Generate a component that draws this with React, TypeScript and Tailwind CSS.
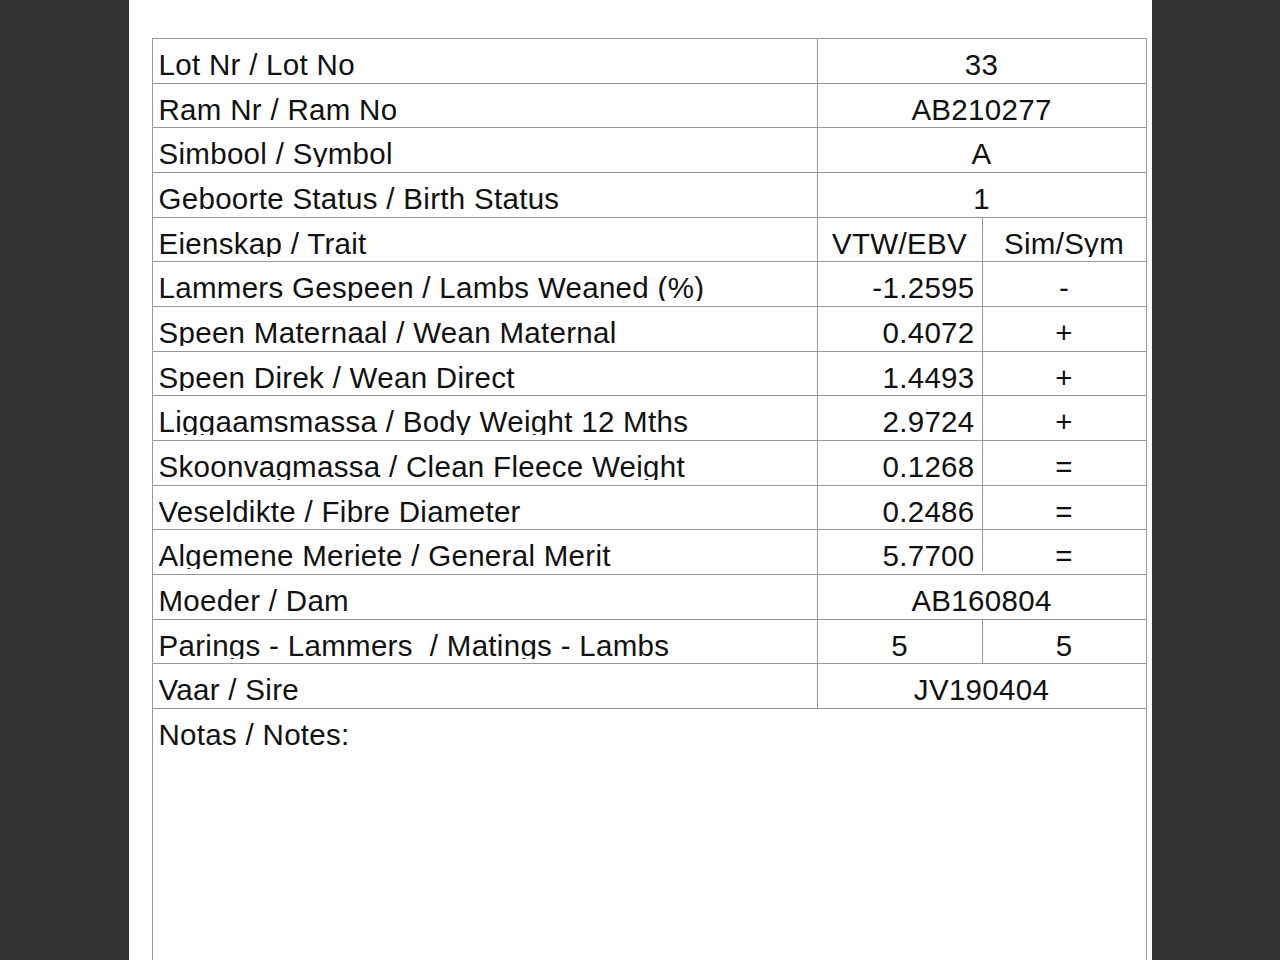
import React from "react";

type Row =
  | { kind: "single"; label: string; value: string }
  | { kind: "split"; label: string; left: string; right: string; leftAlign?: "right" | "center"; cutLine?: boolean };

const rows: Row[] = [
  { kind: "single", label: "Lot Nr / Lot No", value: "33" },
  { kind: "single", label: "Ram Nr / Ram No", value: "AB210277" },
  { kind: "single", label: "Simbool / Symbol", value: "A" },
  { kind: "single", label: "Geboorte Status / Birth Status", value: "1" },
  { kind: "split", label: "Eienskap / Trait", left: "VTW/EBV", right: "Sim/Sym", leftAlign: "center" },
  { kind: "split", label: "Lammers Gespeen / Lambs Weaned (%)", left: "-1.2595", right: "-" },
  { kind: "split", label: "Speen Maternaal / Wean Maternal", left: "0.4072", right: "+" },
  { kind: "split", label: "Speen Direk / Wean Direct", left: "1.4493", right: "+" },
  { kind: "split", label: "Liggaamsmassa / Body Weight 12 Mths", left: "2.9724", right: "+" },
  { kind: "split", label: "Skoonvagmassa / Clean Fleece Weight", left: "0.1268", right: "=" },
  { kind: "split", label: "Veseldikte / Fibre Diameter", left: "0.2486", right: "=" },
  { kind: "split", label: "Algemene Meriete / General Merit", left: "5.7700", right: "=", cutLine: true },
  { kind: "single", label: "Moeder / Dam", value: "AB160804" },
  { kind: "split", label: "Parings - Lammers  / Matings - Lambs", left: "5", right: "5", leftAlign: "center" },
  { kind: "single", label: "Vaar / Sire", value: "JV190404" },
];

// texto recortado abajo, como en la hoja original
function Cell({ children, className = "" }: { children: React.ReactNode; className?: string }) {
  return (
    <div className={`h-[39px] overflow-hidden whitespace-pre pt-[10px] leading-[32px] ${className}`}>
      {children}
    </div>
  );
}

export default function App() {
  return (
    <main
      className="flex min-h-screen justify-center bg-[#333333] text-[29.5px] tracking-[0.3px] text-[#111]"
      style={{ fontFamily: '"Liberation Sans", Helvetica, Arial, sans-serif' }}
    >
      <div className="h-[960px] w-[1023px] overflow-hidden bg-white pl-[23px] pt-[38px]">
        <div className="w-[995px] border border-b-0 border-[#999]">
          {rows.map((r) => (
            <div key={r.label} className="flex h-[44.67px] border-b border-[#999]">
              <div className="w-[665px] shrink-0 border-r border-[#999] pl-[6px]">
                <Cell>{r.label}</Cell>
              </div>
              {r.kind === "single" ? (
                <div className="flex-1">
                  <Cell className="text-center">{r.value}</Cell>
                </div>
              ) : (
                <>
                  <div className="w-[164px] shrink-0">
                    <Cell className={r.leftAlign === "center" ? "text-center" : "pr-[7px] text-right"}>
                      {r.left}
                    </Cell>
                  </div>
                  <div
                    className={`flex-1 ${
                      r.cutLine ? "" : "border-l border-[#999]"
                    }`}
                  >
                    <Cell
                      className={`text-center ${
                        r.cutLine ? "h-[41px] border-l border-[#999]" : ""
                      }`}
                    >
                      {r.right}
                    </Cell>
                  </div>
                </>
              )}
            </div>
          ))}
          <div className="h-[320px] pl-[6px]">
            <Cell>Notas / Notes:</Cell>
          </div>
        </div>
      </div>
    </main>
  );
}
